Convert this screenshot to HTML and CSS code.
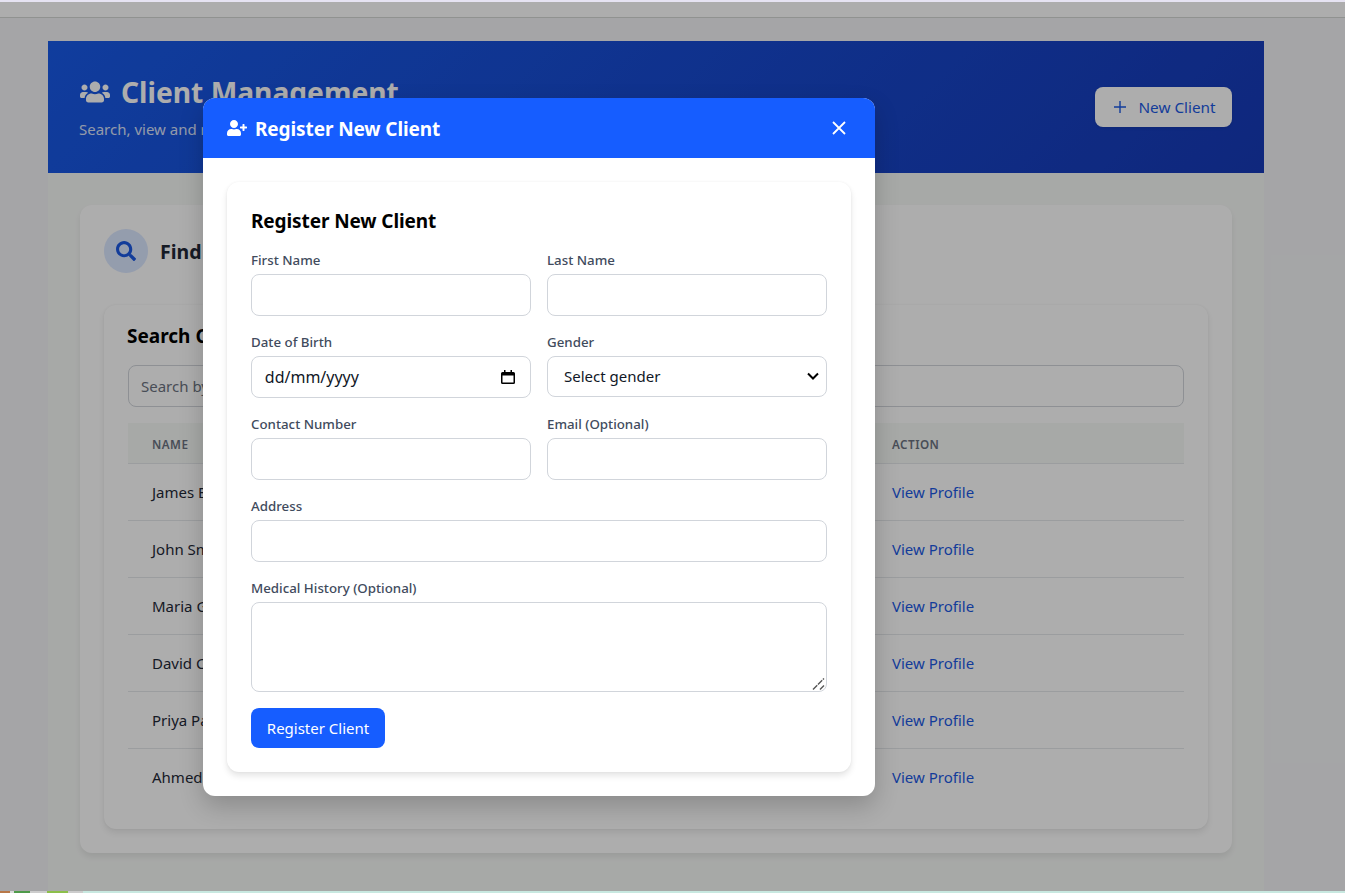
FILE: index.html
```html
<!DOCTYPE html>
<html lang="en">
<head>
  <meta charset="UTF-8">
  <meta name="viewport" content="width=device-width, initial-scale=1.0">
  <title>Client Management</title>
  <link rel="stylesheet" href="styles.css">
</head>
<body>

  <div class="topline"></div>

  <div class="stage">
    <div class="chrome"></div>

    <div class="container">
      <header class="banner">
        <div class="banner-text">
          <h1 class="banner-title">
            <svg class="icon-users" viewBox="0 0 640 512"><path fill="currentColor" d="M96 224c35.3 0 64-28.7 64-64s-28.7-64-64-64-64 28.7-64 64 28.7 64 64 64zm448 0c35.3 0 64-28.7 64-64s-28.7-64-64-64-64 28.7-64 64 28.7 64 64 64zm32 32h-64c-17.6 0-33.5 7.1-45.1 18.6 40.3 22.1 68.9 62 75.1 109.4h66c17.7 0 32-14.3 32-32v-32c0-35.3-28.7-64-64-64zm-256 0c61.9 0 112-50.1 112-112S381.9 32 320 32 208 82.1 208 144s50.1 112 112 112zm76.8 32h-8.3c-20.8 10-43.9 16-68.5 16s-47.6-6-68.5-16h-8.3C179.6 288 128 339.6 128 403.2V432c0 26.5 21.5 48 48 48h288c26.5 0 48-21.5 48-48v-28.8c0-63.6-51.6-115.2-115.2-115.2zm-223.7-13.4C161.5 263.1 145.6 256 128 256H64c-35.3 0-64 28.7-64 64v32c0 17.7 14.3 32 32 32h65.9c6.3-47.4 34.9-87.3 75.2-109.4z"/></svg>
            Client Management
          </h1>
          <p class="banner-sub">Search, view and manage client records</p>
        </div>
        <button class="btn-new" type="button">
          <svg class="icon-plus" viewBox="0 0 14 14"><path d="M7 1v12M1 7h12" stroke="currentColor" stroke-width="1.4" fill="none"/></svg>
          New Client
        </button>
      </header>

      <main class="content">
        <section class="card">
          <div class="find-head">
            <span class="find-icon">
              <svg viewBox="0 0 512 512"><path fill="currentColor" d="M505 442.7L405.3 343c-4.5-4.5-10.6-7-17-7H372c27.6-35.3 44-79.7 44-128C416 93.1 322.9 0 208 0S0 93.1 0 208s93.1 208 208 208c48.3 0 92.7-16.4 128-44v16.3c0 6.4 2.5 12.5 7 17l99.7 99.7c9.4 9.4 24.6 9.4 33.9 0l28.3-28.3c9.4-9.4 9.4-24.6.1-34zM208 336c-70.7 0-128-57.2-128-128 0-70.7 57.2-128 128-128 70.7 0 128 57.2 128 128 0 70.7-57.2 128-128 128z"/></svg>
            </span>
            <h2 class="find-title">Find Clients</h2>
          </div>

          <div class="panel">
            <h3 class="panel-title">Search Clients</h3>
            <input class="search" type="text" placeholder="Search by name or contact number">
            <table class="clients">
              <thead>
                <tr><th>Name</th><th>Contact</th><th>Last Visit</th><th class="col-action">Action</th></tr>
              </thead>
              <tbody>
                <tr><td>James Brown</td><td>555-0101</td><td>12/03/2024</td><td><a href="#">View Profile</a></td></tr>
                <tr><td>John Smith</td><td>555-0102</td><td>08/03/2024</td><td><a href="#">View Profile</a></td></tr>
                <tr><td>Maria Garcia</td><td>555-0103</td><td>02/03/2024</td><td><a href="#">View Profile</a></td></tr>
                <tr><td>David Chen</td><td>555-0104</td><td>27/02/2024</td><td><a href="#">View Profile</a></td></tr>
                <tr><td>Priya Patel</td><td>555-0105</td><td>19/02/2024</td><td><a href="#">View Profile</a></td></tr>
                <tr><td>Ahmed Hassan</td><td>555-0106</td><td>11/02/2024</td><td><a href="#">View Profile</a></td></tr>
              </tbody>
            </table>
          </div>
        </section>
      </main>
    </div>

    <div class="overlay">
      <div class="modal">
        <div class="modal-head">
          <h2 class="modal-title">
            <svg class="icon-user-plus" viewBox="0 0 640 512"><path fill="currentColor" d="M624 208h-64v-64c0-8.8-7.2-16-16-16h-32c-8.8 0-16 7.2-16 16v64h-64c-8.8 0-16 7.2-16 16v32c0 8.8 7.2 16 16 16h64v64c0 8.8 7.2 16 16 16h32c8.8 0 16-7.2 16-16v-64h64c8.8 0 16-7.2 16-16v-32c0-8.8-7.2-16-16-16zm-400 48c70.7 0 128-57.3 128-128S294.7 0 224 0 96 57.3 96 128s57.3 128 128 128zm89.6 32h-16.7c-22.2 10.2-46.9 16-72.9 16s-50.6-5.8-72.9-16h-16.7C60.2 288 0 348.2 0 422.4V464c0 26.5 21.5 48 48 48h352c26.5 0 48-21.5 48-48v-41.6c0-74.2-60.2-134.4-134.4-134.4z"/></svg>
            Register New Client
          </h2>
          <button class="modal-close" type="button" aria-label="Close">
            <svg viewBox="0 0 16 16"><path d="M2 2l12 12M14 2L2 14" stroke="currentColor" stroke-width="1.8" fill="none"/></svg>
          </button>
        </div>

        <div class="modal-body">
          <form class="form-card">
            <h3 class="form-title">Register New Client</h3>
            <div class="form-grid">
              <div class="field">
                <label>First Name</label>
                <input type="text">
              </div>
              <div class="field">
                <label>Last Name</label>
                <input type="text">
              </div>
              <div class="field">
                <label>Date of Birth</label>
                <div class="date-box">
                  <input class="date-text" type="text" value="dd/mm/yyyy">
                  <svg class="icon-cal" viewBox="0 0 16 16"><path fill="currentColor" d="M4 1h1.5v2h5V1H12v2h1.5A1.5 1.5 0 0 1 15 4.5v9a1.5 1.5 0 0 1-1.5 1.5h-11A1.5 1.5 0 0 1 1 13.5v-9A1.5 1.5 0 0 1 2.500 3H4zM2.500 6.500v7h11v-7z"/></svg>
                </div>
              </div>
              <div class="field">
                <label>Gender</label>
                <select>
                  <option>Select gender</option>
                  <option>Male</option>
                  <option>Female</option>
                </select>
              </div>
              <div class="field">
                <label>Contact Number</label>
                <input type="tel">
              </div>
              <div class="field">
                <label>Email (Optional)</label>
                <input type="email">
              </div>
              <div class="field field-wide">
                <label>Address</label>
                <input type="text">
              </div>
              <div class="field field-wide">
                <label>Medical History (Optional)</label>
                <textarea></textarea>
              </div>
            </div>
            <button class="btn-submit" type="button">Register Client</button>
          </form>
        </div>
      </div>
    </div>
  </div>

  <div class="taskbar"></div>

</body>
</html>
```

FILE: styles.css
```css
* {
  box-sizing: border-box;
}
html, body {
  height: 100%;
}
body {
  margin: 0;
  height: 893px;
  overflow: hidden;
  display: flex;
  flex-direction: column;
  background: #f3f4f6;
  color: #111827;
  font-family: "Noto Sans", "Open Sans", sans-serif;
}
.topline {
  height: 2px;
  flex: none;
  background: #e6e3f2;
}
.taskbar {
  height: 2px;
  flex: none;
  background: linear-gradient(90deg, #b87848 0 10px, #d8d8d8 10px 14px, #4e9a4a 14px 30px, #ccc 30px 47px, #8cbf4a 47px 68px, #ccc 68px 83px, #c8e8e0 83px);
}
.stage {
  position: relative;
  flex: 1;
  min-height: 0;
  overflow: hidden;
}
.chrome {
  height: 16px;
  background: #fff;
  border-bottom: 1px solid #d5d8d5;
}
.container {
  width: 1216px;
  margin: 23px 0 0 48px;
  background: #f7f9f7;
  height: 860px;
}

/* page header */
.banner {
  height: 132px;
  padding: 0 32px;
  display: flex;
  align-items: center;
  justify-content: space-between;
  color: #fff;
  background: linear-gradient(135deg, #185ae8, #173ab8);
}
.banner-text {
  padding-bottom: 3px;
}
.banner-title {
  margin: 0;
  display: flex;
  align-items: center;
  gap: 11px;
  font-size: 28.200px;
  font-weight: 700;
  line-height: 38px;
}
.icon-users {
  width: 30px;
  height: 24px;
}
.banner-sub {
  margin: 9px 0 0 -1px;
  font-size: 15px;
  line-height: 19px;
  color: rgba(255, 255, 255, 0.85);
}
.btn-new {
  width: 137px;
  height: 40px;
  padding: 0 0 0 2px;
  display: flex;
  align-items: center;
  justify-content: center;
  gap: 11px;
  border: none;
  border-radius: 8px;
  background: #fff;
  color: #1b59e4;
  font-family: inherit;
  font-size: 15.300px;
  box-shadow: 0 1px 3px rgba(0, 0, 0, 0.1);
}
.icon-plus {
  width: 14px;
  height: 14px;
}

/* find clients */
.content {
  padding: 32px;
}
.card {
  height: 648px;
  padding: 24px;
  background: #fff;
  border-radius: 12px;
  box-shadow: 0 4px 6px rgba(0, 0, 0, 0.08);
}
.find-head {
  display: flex;
  align-items: center;
  gap: 12px;
}
.find-icon {
  width: 44px;
  height: 44px;
  display: flex;
  align-items: center;
  justify-content: center;
  border-radius: 50%;
  background: #dbe7ff;
  color: #1b59e4;
}
.find-icon svg {
  width: 20px;
  height: 20px;
}
.find-title {
  margin: 0;
  font-size: 19.500px;
  font-weight: 700;
  color: #1f2937;
}
.panel {
  margin-top: 32px;
  height: 524px;
  padding: 16px 24px 24px;
  background: #fff;
  border-radius: 12px;
  box-shadow: 0 4px 6px rgba(0, 0, 0, 0.08), 0 0 3px rgba(0, 0, 0, 0.05);
}
.panel-title {
  margin: 0 0 14px -1px;
  font-size: 19px;
  font-weight: 700;
  line-height: 30px;
  color: #000;
}
.search {
  width: 100%;
  height: 42px;
  padding: 0 12px;
  border: 1px solid #d1d5db;
  border-radius: 8px;
  font-family: inherit;
  font-size: 15px;
}
.search::placeholder {
  color: #6b7280;
}
.clients {
  width: 100%;
  margin-top: 16px;
  border-collapse: collapse;
  table-layout: fixed;
}
.clients th {
  height: 40px;
  padding: 2px 24px 0;
  text-align: left;
  font-size: 11.700px;
  font-weight: 600;
  letter-spacing: 0.04em;
  text-transform: uppercase;
  color: #6b7280;
  background: #f7f9f7;
  border-bottom: 1px solid #e5e7eb;
}
.clients td {
  height: 57px;
  padding: 0 24px;
  font-size: 15px;
  color: #1f2937;
  border-bottom: 1px solid #e5e7eb;
}
.clients tbody tr:last-child td {
  border-bottom: none;
}
.clients a {
  color: #1b59e4;
  text-decoration: none;
}
.col-action {
  width: 316px;
}

/* modal */
.overlay {
  position: absolute;
  inset: 0;
  padding-left: 203px;
  display: flex;
  align-items: center;
  background: rgba(0, 0, 0, 0.32);
}
.modal {
  width: 672px;
  height: 698px;
  background: #fff;
  border-radius: 12px;
  overflow: hidden;
  box-shadow: 0 10px 25px rgba(0, 0, 0, 0.2);
}
.modal-head {
  height: 60px;
  padding: 0 24px;
  display: flex;
  align-items: center;
  justify-content: space-between;
  background: #165dff;
  color: #fff;
}
.modal-title {
  margin: 0;
  padding-top: 2px;
  display: flex;
  align-items: center;
  gap: 8px;
  font-size: 19px;
  font-weight: 700;
  letter-spacing: -0.1px;
}
.icon-user-plus {
  width: 20px;
  height: 16px;
  margin-bottom: 2px;
}
.modal-close {
  width: 24px;
  height: 24px;
  padding: 4px;
  border: none;
  background: none;
  color: #fff;
}
.modal-close svg {
  display: block;
}
.modal-body {
  padding: 24px;
}
.form-card {
  height: 590px;
  padding: 24px;
  background: #fff;
  border-radius: 12px;
  box-shadow: 0 4px 6px rgba(0, 0, 0, 0.1), 0 0 3px rgba(0, 0, 0, 0.05);
}
.form-title {
  margin: 0 0 14px;
  font-size: 19px;
  font-weight: 700;
  line-height: 30px;
  letter-spacing: -0.1px;
  color: #000;
}
.form-grid {
  display: grid;
  grid-template-columns: 1fr 1fr;
  column-gap: 16px;
  row-gap: 16px;
}
.field-wide {
  grid-column: 1 / -1;
}
.field label {
  display: block;
  height: 24px;
  font-size: 13.300px;
  font-weight: 500;
  line-height: 20px;
  color: #414b5d;
}
.field input,
.field select,
.field textarea,
.date-box {
  width: 100%;
  height: 42px;
  padding: 0 12.800px;
  border: 1px solid #d1d5db;
  border-radius: 8px;
  background: #fff;
  font-family: inherit;
  font-size: 16px;
  color: #111827;
}
.field select {
  height: 41px;
  padding-left: 16px;
  font-size: 15px;
  appearance: none;
  background: #fff url("data:image/svg+xml,%3Csvg xmlns='http://www.w3.org/2000/svg' viewBox='0 0 12 8'%3E%3Cpath d='M1 1.500l5 5 5-5' fill='none' stroke='%23000' stroke-width='2'/%3E%3C/svg%3E") no-repeat right 7px center / 12px 8px;
}
.field textarea {
  display: block;
  height: 90px;
  padding: 12px;
}
.field textarea::-webkit-resizer {
  background: url("data:image/svg+xml,%3Csvg xmlns='http://www.w3.org/2000/svg' viewBox='0 0 15 15'%3E%3Cpath d='M2 13.500L13 2.500M9 13.500l4-4' fill='none' stroke='%23555' stroke-width='1.400' stroke-dasharray='6 1'/%3E%3C/svg%3E") no-repeat center / 15px 15px;
}
.date-box {
  display: flex;
  align-items: center;
}
.field .date-text {
  flex: 1;
  min-width: 0;
  height: 100%;
  padding: 0;
  border: none;
  background: none;
}
.icon-cal {
  width: 16px;
  height: 16px;
  margin-right: 1px;
  color: #000;
}
.btn-submit {
  display: block;
  width: 134px;
  height: 40px;
  margin-top: 16px;
  border: none;
  border-radius: 8px;
  background: #165dff;
  color: #fff;
  font-family: inherit;
  font-size: 15px;
}
```
